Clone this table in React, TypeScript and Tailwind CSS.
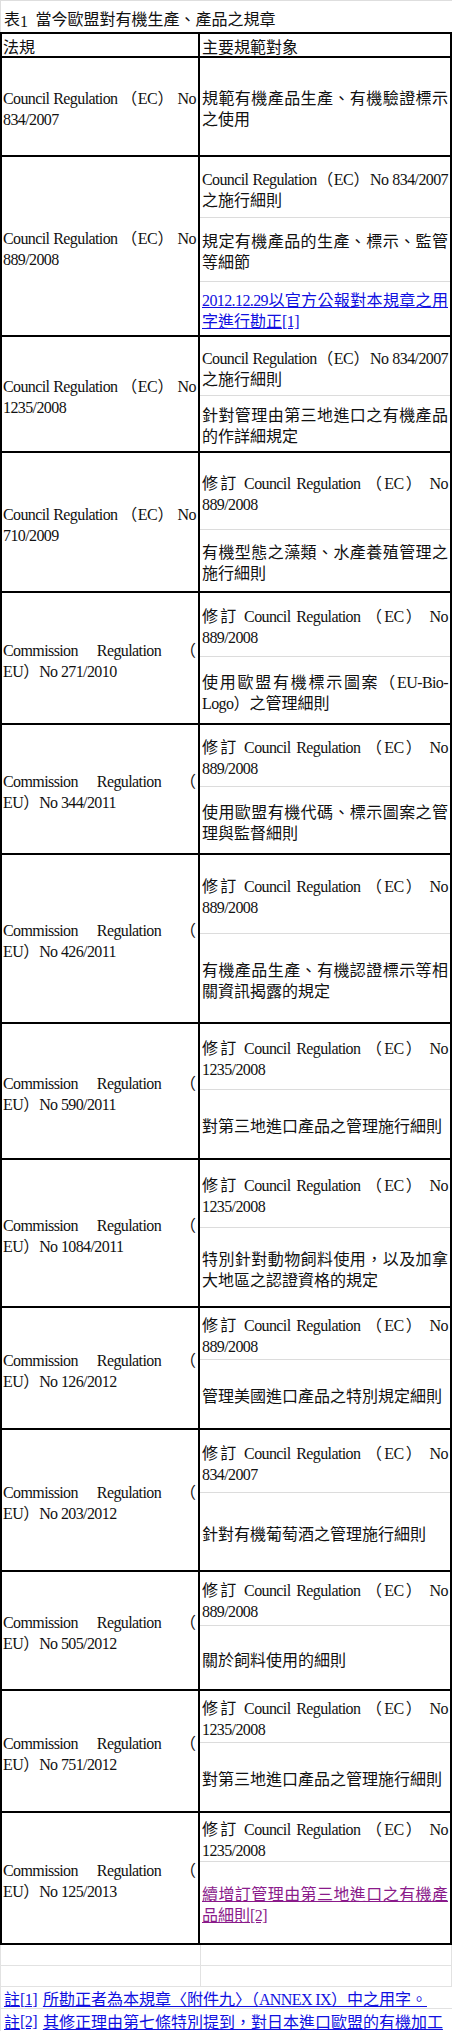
import React from "react";

type Sub = { h?: string; lines: string[]; link?: "blue" | "purple" };
type Row = { h: string; left: string[]; right: Sub[] };

function Txt({ t }: { t: string }) {
  const parts = t.split(/([\x20-\x7e]+)/);
  return (
    <>
      {parts.map((p, i) =>
        p === "" ? null : /^[\x20-\x7e]+$/.test(p) ? (
          <span key={i} className="text-[16px] leading-[16px] tracking-[-0.6px]">
            {p}
          </span>
        ) : (
          <span key={i}>{p}</span>
        )
      )}
    </>
  );
}

function Lines({ lines }: { lines: string[] }) {
  return (
    <>
      {lines.map((l, i) => (
        <div
          key={i}
          className={i < lines.length - 1 ? "text-justify [text-align-last:justify]" : "text-left"}
        >
          <Txt t={l} />
        </div>
      ))}
    </>
  );
}

const CR = "Council Regulation （EC） No";
const CM = "Commission Regulation （";
const MOD = "修訂 Council Regulation （EC） No";

const rows: Row[] = [
  {
    h: "h-[99px]",
    left: [CR, "834/2007"],
    right: [{ lines: ["規範有機產品生產、有機驗證標示", "之使用"] }],
  },
  {
    h: "h-[180px]",
    left: [CR, "889/2008"],
    right: [
      { h: "h-[61px]", lines: ["Council Regulation（EC）No 834/2007", "之施行細則"] },
      { h: "h-[64px]", lines: ["規定有機產品的生產、標示、監管", "等細節"] },
      { lines: ["2012.12.29以官方公報對本規章之用", "字進行勘正[1]"], link: "blue" },
    ],
  },
  {
    h: "h-[116px]",
    left: [CR, "1235/2008"],
    right: [
      { h: "h-[59px]", lines: ["Council Regulation（EC）No 834/2007", "之施行細則"] },
      { lines: ["針對管理由第三地進口之有機產品", "的作詳細規定"] },
    ],
  },
  {
    h: "h-[140px]",
    left: [CR, "710/2009"],
    right: [
      { h: "h-[77px]", lines: [MOD, "889/2008"] },
      { lines: ["有機型態之藻類、水產養殖管理之", "施行細則"] },
    ],
  },
  {
    h: "h-[132px]",
    left: [CM, "EU）No 271/2010"],
    right: [
      { h: "h-[64px]", lines: [MOD, "889/2008"] },
      { lines: ["使用歐盟有機標示圖案（EU-Bio-", "Logo）之管理細則"] },
    ],
  },
  {
    h: "h-[130px]",
    left: [CM, "EU）No 344/2011"],
    right: [
      { h: "h-[62px]", lines: [MOD, "889/2008"] },
      { lines: ["使用歐盟有機代碼、標示圖案之管", "理與監督細則"] },
    ],
  },
  {
    h: "h-[169px]",
    left: [CM, "EU）No 426/2011"],
    right: [
      { h: "h-[79px]", lines: [MOD, "889/2008"] },
      { lines: ["有機產品生產、有機認證標示等相", "關資訊揭露的規定"] },
    ],
  },
  {
    h: "h-[136px]",
    left: [CM, "EU）No 590/2011"],
    right: [
      { h: "h-[66px]", lines: [MOD, "1235/2008"] },
      { lines: ["對第三地進口產品之管理施行細則"] },
    ],
  },
  {
    h: "h-[148px]",
    left: [CM, "EU）No 1084/2011"],
    right: [
      { h: "h-[68px]", lines: [MOD, "1235/2008"] },
      { lines: ["特別針對動物飼料使用，以及加拿", "大地區之認證資格的規定"] },
    ],
  },
  {
    h: "h-[122px]",
    left: [CM, "EU）No 126/2012"],
    right: [
      { h: "h-[52px]", lines: [MOD, "889/2008"] },
      { lines: ["管理美國進口產品之特別規定細則"] },
    ],
  },
  {
    h: "h-[142px]",
    left: [CM, "EU）No 203/2012"],
    right: [
      { h: "h-[63px]", lines: [MOD, "834/2007"] },
      { lines: ["針對有機葡萄酒之管理施行細則"] },
    ],
  },
  {
    h: "h-[119px]",
    left: [CM, "EU）No 505/2012"],
    right: [
      { h: "h-[54px]", lines: [MOD, "889/2008"] },
      { lines: ["關於飼料使用的細則"] },
    ],
  },
  {
    h: "h-[122px]",
    left: [CM, "EU）No 751/2012"],
    right: [
      { h: "h-[52px]", lines: [MOD, "1235/2008"] },
      { lines: ["對第三地進口產品之管理施行細則"] },
    ],
  },
  {
    h: "h-[132px]",
    left: [CM, "EU）No 125/2013"],
    right: [
      { h: "h-[49px]", lines: [MOD, "1235/2008"] },
      { lines: ["續增訂管理由第三地進口之有機產", "品細則[2]"], link: "purple" },
    ],
  },
];

export default function App() {
  return (
    <div
      lang="zh-Hant"
      className="w-[452px] bg-white text-[16px] leading-[21px] text-[#111] font-['Liberation_Serif','Noto_Sans_CJK_TC',serif]"
    >
      {/* title */}
      <div className="h-[32px] flex items-end pb-[2px] pl-[3px] border-t border-l border-[#dedede] whitespace-nowrap">
        <Txt t="表1" />
        <span className="pl-[8px]">當今歐盟對有機生產、產品之規章</span>
      </div>

      {/* table */}
      <div className="border-t-2 border-black">
        <div className="grid grid-cols-[198px_1fr] h-[24px] border-x-2 border-b-2 border-black">
          <div className="border-r-2 border-black pl-[1px] flex items-end leading-[17px]">法規</div>
          <div className="pl-[2px] flex items-end leading-[17px]">主要規範對象</div>
        </div>
        {rows.map((r, i) => (
          <div key={i} className={`grid grid-cols-[198px_1fr] border-x-2 border-b-2 border-black ${r.h}`}>
            <div className="border-r-2 border-black pl-[1px] pr-[2px] pt-[5px] flex flex-col justify-center">
              <Lines lines={r.left} />
            </div>
            <div className="flex flex-col">
              {r.right.map((s, j) => (
                <div
                  key={j}
                  className={`flex flex-col justify-center pl-[2px] pr-[2px] pt-[5px] ${
                    s.h ? `${s.h} border-b border-[#dcdcdc]` : "flex-1"
                  } ${
                    s.link === "blue"
                      ? "text-[#1010e0] underline"
                      : s.link === "purple"
                      ? "text-[#8a1a8a] underline"
                      : ""
                  }`}
                >
                  <Lines lines={s.lines} />
                </div>
              ))}
            </div>
          </div>
        ))}
      </div>

      {/* empty spreadsheet rows */}
      <div className="grid grid-cols-[200px_1fr] h-[21px] border-b border-l border-[#e2e2e2]">
        <div className="border-r border-[#e2e2e2]" />
        <div className="border-r border-[#e2e2e2]" />
      </div>
      <div className="grid grid-cols-[200px_1fr] h-[21px] border-b border-l border-[#e2e2e2]">
        <div className="border-r border-[#e2e2e2]" />
        <div className="border-r border-[#e2e2e2]" />
      </div>

      {/* footnotes */}
      <div className="h-[22px] flex items-center pt-[4px] pl-[3px] border-b border-l border-[#e2e2e2] whitespace-nowrap text-[#1010e0] underline">
        <Txt t="註[1]" />
        <span className="pl-[6px]">
          <Txt t="所勘正者為本規章〈附件九〉（ANNEX IX）中之用字。" />
        </span>
      </div>
      <div className="h-[22px] flex items-center pt-[4px] pl-[3px] border-l border-[#e2e2e2] whitespace-nowrap overflow-hidden text-[#1010e0] underline">
        <Txt t="註[2]" />
        <span className="pl-[6px]">
          <Txt t="其修正理由第七條特別提到，對日本進口歐盟的有機加工" />
        </span>
      </div>
    </div>
  );
}
